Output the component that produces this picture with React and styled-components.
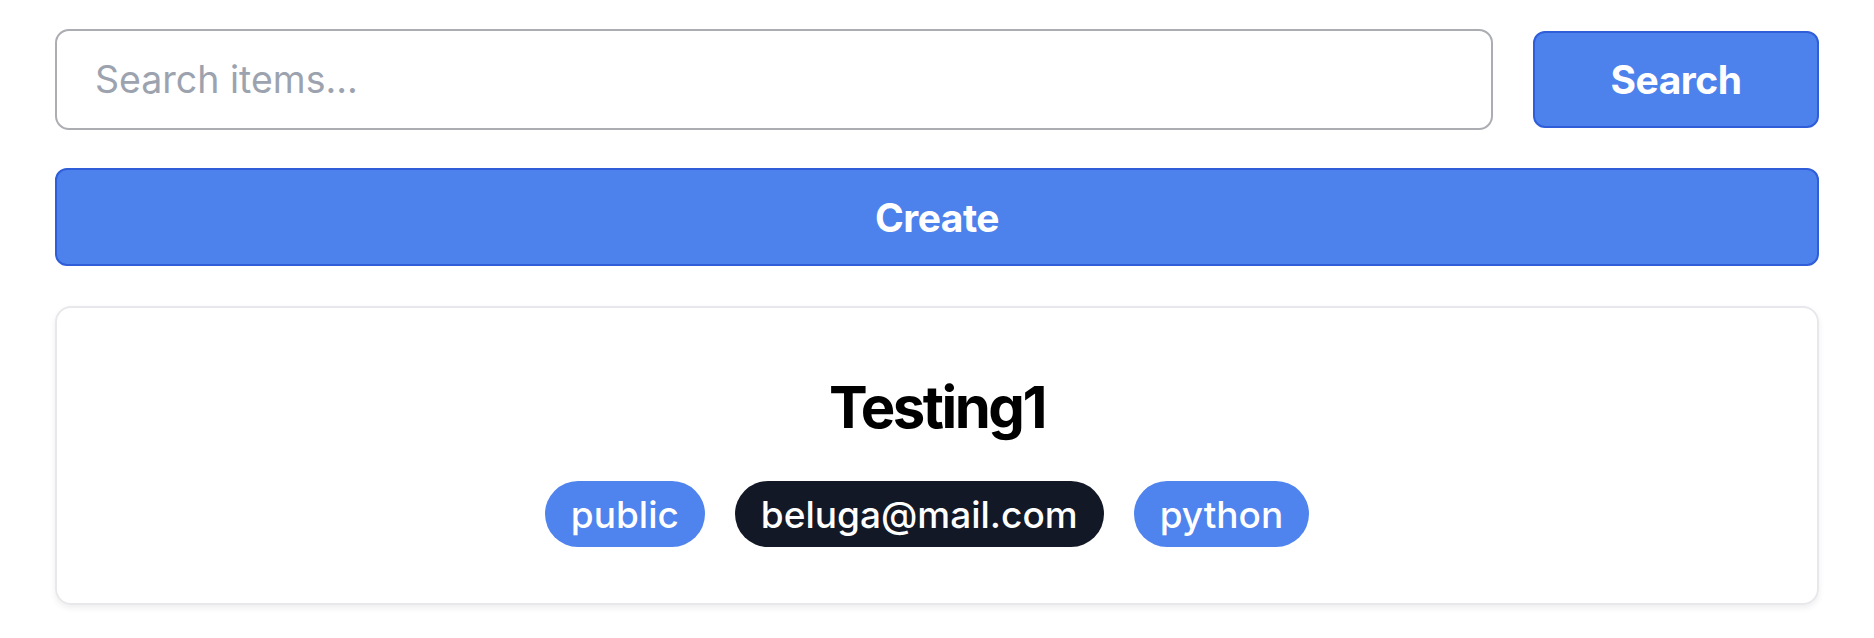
import React from "react";
import styled, { createGlobalStyle } from "styled-components";

const GlobalStyle = createGlobalStyle`
  body {
    margin: 0;
    background: #fff;
    font-family: Inter, "Noto Sans", sans-serif;
  }
`;

const Page = styled.div`
  display: flex;
  flex-direction: column;
  padding: 29px 55px;
`;

const SearchRow = styled.div`
  display: flex;
  align-items: center;
  gap: 40px;
`;

const SearchInput = styled.input`
  flex: 1;
  height: 101px;
  box-sizing: border-box;
  border: 2px solid #abadb2;
  border-radius: 14px;
  padding: 0 38px;
  font-family: Inter, sans-serif;
  font-size: 37.5px;
  color: #111827;
  outline: none;

  &::placeholder {
    color: #9ca3af;
  }
`;

const Button = styled.button`
  height: ${(props) => (props.wide ? "98px" : "97px")};
  width: ${(props) => (props.wide ? "100%" : "286px")};
  margin-top: ${(props) => (props.wide ? "38px" : "0")};
  box-sizing: border-box;
  background: #4d82ed;
  border: 2px solid #2f5ed8;
  border-radius: 12px;
  color: #fff;
  font-family: Inter, sans-serif;
  font-weight: 700;
  font-size: 39px;
  letter-spacing: -0.5px;
  cursor: pointer;
`;

const Card = styled.div`
  margin-top: 40px;
  box-sizing: border-box;
  height: 299px;
  border: 2px solid #e8e8ec;
  border-radius: 16px;
  box-shadow: 0 3px 6px rgba(0, 0, 0, 0.07);
  display: flex;
  flex-direction: column;
  align-items: center;
  padding-top: 64px;
`;

const Title = styled.h2`
  margin: 0;
  font-size: 58px;
  line-height: 70px;
  font-weight: 700;
  letter-spacing: -2.5px;
  color: #000;
`;

const Tags = styled.div`
  display: flex;
  flex-wrap: wrap;
  justify-content: center;
  gap: 10px;
  margin-top: 39px;
`;

const Tag = styled.span`
  display: inline-flex;
  align-items: center;
  height: 66px;
  padding: 0 26px;
  margin-right: 20px;
  border-radius: 33px;
  background: ${(props) => (props.dark ? "#131826" : "#4f83ee")};
  color: #fff;
  font-size: 37px;
  font-weight: 500;
`;

export default function App() {
  return (
    <>
      <GlobalStyle />
      <Page>
        <SearchRow>
          <SearchInput placeholder="Search items..." />
          <Button>Search</Button>
        </SearchRow>
        <Button wide>Create</Button>
        <Card>
          <Title>Testing1</Title>
          <Tags>
            <Tag>public</Tag>
            <Tag dark>beluga@mail.com</Tag>
            <Tag>python</Tag>
          </Tags>
        </Card>
      </Page>
    </>
  );
}
